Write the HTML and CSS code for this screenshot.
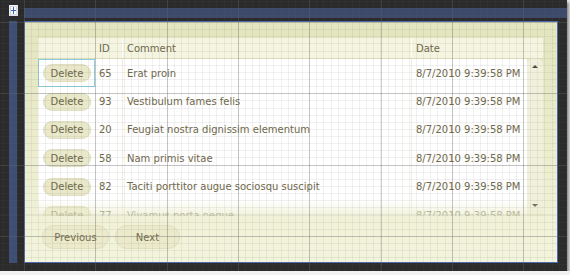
FILE: index.html
```html
<!DOCTYPE html>
<html lang="en">
<head>
    <meta charset="UTF-8">
    <meta name="viewport" content="width=device-width, initial-scale=1.0">
    <title>Comments grid - design view</title>
    <link rel="stylesheet" href="styles.css">
</head>
<body>
    <div class="screen">
        <div class="tool-icon">
            <svg width="9" height="11" viewBox="0 0 9 11">
                <rect x="0.5" y="0.5" width="8" height="10" fill="#d8dce4" stroke="#f2f2f2"/>
                <rect x="2" y="2" width="5" height="7" fill="#ffffff"/>
                <rect x="4" y="2" width="1" height="7" fill="#3a64b8"/>
                <rect x="2" y="5" width="5" height="1" fill="#3a64b8"/>
            </svg>
        </div>
        <div class="top-bar"></div>
        <div class="side-bar"></div>
        <div class="panel">
            <div class="grid">
                <div class="grid-header">
                    <div class="cell cell-action"></div>
                    <div class="cell cell-id">ID</div>
                    <div class="cell cell-comment">Comment</div>
                    <div class="cell cell-date">Date</div>
                </div>
                <div class="grid-body">
                    <div class="rows">
                        <div class="row">
                            <div class="cell cell-action selected"><button class="pill">Delete</button></div>
                            <div class="cell cell-id">65</div>
                            <div class="cell cell-comment">Erat proin</div>
                            <div class="cell cell-date">8/7/2010 9:39:58 PM</div>
                        </div>
                        <div class="row">
                            <div class="cell cell-action"><button class="pill">Delete</button></div>
                            <div class="cell cell-id">93</div>
                            <div class="cell cell-comment">Vestibulum fames felis</div>
                            <div class="cell cell-date">8/7/2010 9:39:58 PM</div>
                        </div>
                        <div class="row">
                            <div class="cell cell-action"><button class="pill">Delete</button></div>
                            <div class="cell cell-id">20</div>
                            <div class="cell cell-comment">Feugiat nostra dignissim elementum</div>
                            <div class="cell cell-date">8/7/2010 9:39:58 PM</div>
                        </div>
                        <div class="row">
                            <div class="cell cell-action"><button class="pill">Delete</button></div>
                            <div class="cell cell-id">58</div>
                            <div class="cell cell-comment">Nam primis vitae</div>
                            <div class="cell cell-date">8/7/2010 9:39:58 PM</div>
                        </div>
                        <div class="row">
                            <div class="cell cell-action"><button class="pill">Delete</button></div>
                            <div class="cell cell-id">82</div>
                            <div class="cell cell-comment">Taciti porttitor augue sociosqu suscipit</div>
                            <div class="cell cell-date">8/7/2010 9:39:58 PM</div>
                        </div>
                        <div class="row">
                            <div class="cell cell-action"><button class="pill">Delete</button></div>
                            <div class="cell cell-id">77</div>
                            <div class="cell cell-comment">Vivamus porta neque</div>
                            <div class="cell cell-date">8/7/2010 9:39:58 PM</div>
                        </div>
                    </div>
                    <div class="scrollbar">
                        <span class="arrow arrow-up"></span>
                        <span class="arrow arrow-down"></span>
                    </div>
                </div>
            </div>
            <div class="pager">
                <button class="pill pager-btn btn-prev">Previous</button>
                <button class="pill pager-btn btn-next">Next</button>
            </div>
        </div>
    </div>
</body>
</html>
```

FILE: styles.css
```css
body {
    margin: 0;
    background-color: #f2f2f2;
    font-family: "DejaVu Sans", Verdana, sans-serif;
    font-size: 10px;
    color: #6f6849;
}
.screen {
    position: relative;
    width: 567px;
    height: 271px;
    display: grid;
    grid-template-columns: 9px 8px 7px 534px 9px;
    grid-template-rows: 8px 10px 3px 242px 8px;
    background-color: #2b2b2b;
    box-shadow: 2px 2px 3px rgba(0,0,0,0.45);
    overflow: hidden;
}
/* design surface grid drawn over everything */
.screen::after {
    content: "";
    position: absolute;
    inset: 0;
    pointer-events: none;
    background-image:
        repeating-linear-gradient(to right, transparent 0 24px, rgba(100,100,100,0.32) 24px 25px, transparent 25px 71.3px),
        repeating-linear-gradient(to bottom, transparent 0 22px, rgba(100,100,100,0.32) 22px 23px, transparent 23px 71.3px),
        repeating-linear-gradient(to right, transparent 0 2.55px, rgba(100,100,100,0.09) 2.55px 3.55px, transparent 3.55px 7.13px),
        repeating-linear-gradient(to bottom, transparent 0 0.6px, rgba(100,100,100,0.09) 0.6px 1.6px, transparent 1.6px 7.13px);
}
.tool-icon {
    grid-column: 2 / 4;
    grid-row: 1 / 4;
    margin-top: 5px;
    line-height: 0;
}
.top-bar {
    grid-column: 4 / 6;
    grid-row: 2;
    background-color: #3d4a6a;
}
.side-bar {
    grid-column: 2;
    grid-row: 4;
    background-color: #3e4e75;
}
.panel {
    grid-column: 4;
    grid-row: 4;
    box-sizing: border-box;
    border: 1px solid #4d6bb3;
    background: linear-gradient(to bottom, #e2e5bd, #f3f4dc);
    padding: 16px 14px 0 13px;
}
.grid {
    width: 505px;
}
.grid-header {
    display: grid;
    grid-template-columns: 57px 27px 289px 132px;
    height: 20px;
    align-items: center;
    background-color: #f4f4e0;
}
.grid-header .cell-comment,
.grid-header .cell-date {
    border-left: 1px solid rgba(255,255,255,0.8);
}
.cell {
    box-sizing: border-box;
    height: 100%;
    display: flex;
    align-items: center;
    padding-left: 4px;
    white-space: nowrap;
    overflow: hidden;
}
.grid-body {
    position: relative;
    display: flex;
    align-items: flex-start;
    height: 157px;
    margin-top: 1px;
    overflow: hidden;
}
.grid-body::after {
    content: "";
    position: absolute;
    left: 0;
    right: 0;
    bottom: 0;
    height: 16px;
    background: linear-gradient(to bottom, rgba(255,255,255,0), rgba(238,239,210,0.55) 70%, rgba(236,238,206,0.75));
}
.rows {
    width: 489px;
    height: 157px;
    background-color: #ffffff;
}
.row {
    display: grid;
    grid-template-columns: 57px 27px 289px 116px;
    height: 28.4px;
}
.row .cell-comment,
.row .cell-date {
    border-left: 1px solid #efeedb;
}
.row .cell-action {
    padding-left: 5px;
}
.selected {
    box-shadow: inset 0 0 0 1px #8dcfe0;
}
.pill {
    font-family: inherit;
    font-size: 10px;
    color: #6f6849;
    background-color: #e9e8ca;
    border: 1px solid #e1dfbf;
    padding: 0;
    cursor: pointer;
}
.cell .pill {
    width: 48px;
    height: 18px;
    border-radius: 9px;
}
.scrollbar {
    position: relative;
    width: 16px;
    height: 154px;
    background-color: #f1f0dc;
    border-radius: 5px;
}
.arrow {
    position: absolute;
    left: 5px;
    width: 0;
    height: 0;
    border-left: 3px solid transparent;
    border-right: 3px solid transparent;
}
.arrow-up {
    top: 6px;
    border-bottom: 3px solid #4f4b3a;
}
.arrow-down {
    bottom: 6px;
    border-top: 3px solid #4f4b3a;
}
.pager {
    display: flex;
    gap: 6px;
    margin-top: 9px;
    padding-left: 4px;
}
.pager-btn {
    height: 24px;
    border-radius: 12px;
    color: #77704f;
    background-color: #ebeacb;
}
.btn-prev {
    width: 67px;
}
.btn-next {
    width: 65px;
}
```
